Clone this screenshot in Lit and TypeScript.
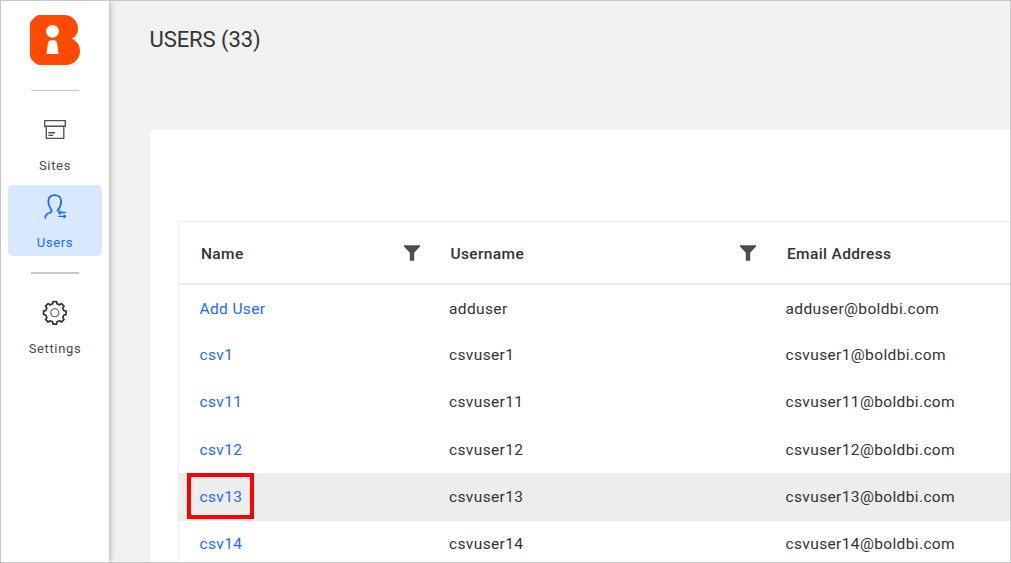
import { LitElement, html, css, svg } from "lit";
import { customElement } from "lit/decorators.js";
import { classMap } from "lit/directives/class-map.js";

interface User { name: string; username: string; active?: boolean; raised?: boolean; }

const users: User[] = [
  { name: "Add User", username: "adduser" },
  { name: "csv1", username: "csvuser1", raised: true },
  { name: "csv11", username: "csvuser11", raised: true },
  { name: "csv12", username: "csvuser12" },
  { name: "csv13", username: "csvuser13", active: true },
  { name: "csv14", username: "csvuser14" },
];

const gearPath = (() => {
  const pts: string[] = [];
  for (let i = 0; i < 8; i++) {
    const a = (i * 45 - 90) * Math.PI / 180;
    for (const [r, d] of [[9.3, -0.24], [11.4, -0.16], [11.4, 0.16], [9.3, 0.24]]) {
      pts.push(`${(12.8 + r * Math.cos(a + d)).toFixed(2)} ${(12.8 + r * Math.sin(a + d)).toFixed(2)}`);
    }
  }
  return "M" + pts.join("L") + "Z";
})();

const filter = html`<svg class="filter" width="16" height="16" viewBox="0 0 16 16">
  <path d="M0 .3H16V1.4L10.2 7.8V15.7H5.8V7.8L0 1.4Z" fill="#4d4d4d"/></svg>`;

@customElement("app-root")
export class AppRoot extends LitElement {
  static styles = css`
    :host { display: block; font-family: Roboto, "Liberation Sans", sans-serif; color: #333; }
    * { box-sizing: border-box; }
    .frame { display: flex; width: 1011px; height: 563px; border: 1px solid #c8c8c8; background: #f1f1f1; overflow: hidden; }
    .side { width: 108px; flex: none; background: #fff; box-shadow: 1px 0 6px rgba(0,0,0,.28); display: flex; flex-direction: column; align-items: center; z-index: 1; }
    .logo { margin-top: 14px; display: block; flex: none; }
    .rule { width: 48px; height: 1px; flex: none; background: #c8c8c8; margin-top: 24px; }
    .rule.thick { height: 2px; margin-top: 16px; }
    .item { width: 94px; height: 71px; flex: none; display: flex; flex-direction: column; align-items: center; border-radius: 5px; font-size: 13px; letter-spacing: .65px; color: #4a4a4a; line-height: 16px; }
    .item svg { display: block; height: 26px; width: 26px; margin-top: 9px; }
    .item span { margin-top: 15px; white-space: nowrap; }
    .sites { margin-top: 17px; }
    .users { margin-top: 6px; background: #dae8ff; color: #1469ff; }
    .settings { margin-top: 17px; }
    .main { flex: 1; min-width: 0; padding-left: 41px; }
    h1 { margin: 0 0 0 -.5px; padding-top: 23px; height: 98px; font-size: 22px; line-height: 32px; letter-spacing: -.08px; font-weight: 400; color: #333; }
    .divider { height: 1px; background: #ededed; margin: 2px 0 28px; }
    .card { background: #fff; border-top-left-radius: 4px; height: 440px; padding: 91px 0 0 29px; }
    .grid { border: 1px solid #ececec; border-right: 0; border-bottom: 0; margin-left: -1px; height: 360px; }
    .row { display: grid; grid-template-columns: 249.5px 336.5px 1fr; height: 47px; align-items: center; padding-left: 20.5px; font-size: 15.5px; letter-spacing: .37px; line-height: 18px; }
    .row.head { height: 63px; border-bottom: 2px solid #ececec; font-weight: 500; padding-left: 22px; padding-top: 1px; letter-spacing: .36px; }
    .head span { padding-top: 1px; }
    .row.raised { padding-bottom: 2px; }
    .row.active { background: #ededed; height: 48px; margin-bottom: -1px; }
    .cell { display: flex; align-items: center; justify-content: space-between; }
    .filter { margin-right: 31px; }
    .link { color: #1f69ff; position: relative; }
    .mark { position: absolute; left: -12.5px; top: -15px; width: 67px; height: 46px; border: 4px solid #f00; }
  `;

  render() {
    return html`<div class="frame">
      <nav class="side">
        <svg class="logo" width="50" height="51" viewBox="0 0 50 51">
          <path fill="#ff4a00" d="M9 0H34C42 0 48 6 48 14C48 18.5 45.5 22 41.5 23.6C46.5 25.5 50 30 50 36C50 44 43.5 50 35.5 50H10Q7 50 5 48L2 45Q0 43 0 40V9Q0 7 1.5 5.5L5 2Q7 0 9 0Z"/>
          <circle cx="22.5" cy="16.3" r="6.4" fill="#fff"/>
          <path fill="#fff" d="M16.4 39L18 28Q18.5 25 22.5 25T27 28L28.6 39Z"/>
        </svg>
        <div class="rule"></div>
        <div class="item sites">
          <svg viewBox="0 0 26 26" fill="none" stroke="#505050" stroke-width="1.35">
            <path d="M2.7 3.6H23.3V9.2H2.7ZM4.3 9.2V21.4H21.8V9.2M6.3 15.7H13M6.3 18.4H11.2"/></svg>
          <span>Sites</span>
        </div>
        <div class="item users">
          <svg viewBox="0 0 26 26" fill="none" stroke="#1469ff" stroke-width="1.8" stroke-linecap="round" stroke-linejoin="round">
            <path d="M3.2 23.7C3.4 20.8 5 19.7 7.4 19C9.8 18.2 10.2 16.9 8.7 14.8C6.9 12.2 6.3 9.9 6.3 7.3C6.3 3.3 8.8 1.2 12.5 1.2S19.2 3.3 19.2 7.6C19.2 11.4 17.8 13.7 15.5 16.6"/>
            <path stroke-width="1.3" d="M16.6 18.5H23.3M18.2 17L16.6 18.5L18.2 20M16.8 22.4H23.6M22 20.9L23.6 22.4L22 23.9"/></svg>
          <span>Users</span>
        </div>
        <div class="rule thick"></div>
        <div class="item settings">
          <svg viewBox="0 0 26 26" fill="none" stroke="#333">
            ${svg`<path d=${gearPath} stroke-width="1.7" stroke-linejoin="round"/>`}
            <circle cx="12.8" cy="12.8" r="4" stroke-width="1.1" stroke="#555"/></svg>
          <span>Settings</span>
        </div>
      </nav>
      <main class="main">
        <h1>USERS (33)</h1>
        <div class="divider"></div>
        <section class="card"><div class="grid">
          <div class="row head">
            <div class="cell"><span>Name</span>${filter}</div>
            <div class="cell"><span>Username</span>${filter}</div>
            <div class="cell"><span>Email Address</span></div>
          </div>
          ${users.map(u => html`<div class=${classMap({ row: true, active: !!u.active, raised: !!u.raised })}>
            <div class="cell"><span class="link">${u.name}${u.active ? html`<i class="mark"></i>` : ""}</span></div>
            <div class="cell">${u.username}</div>
            <div class="cell">${u.username}@boldbi.com</div>
          </div>`)}
        </div></section>
      </main>
    </div>`;
  }
}
